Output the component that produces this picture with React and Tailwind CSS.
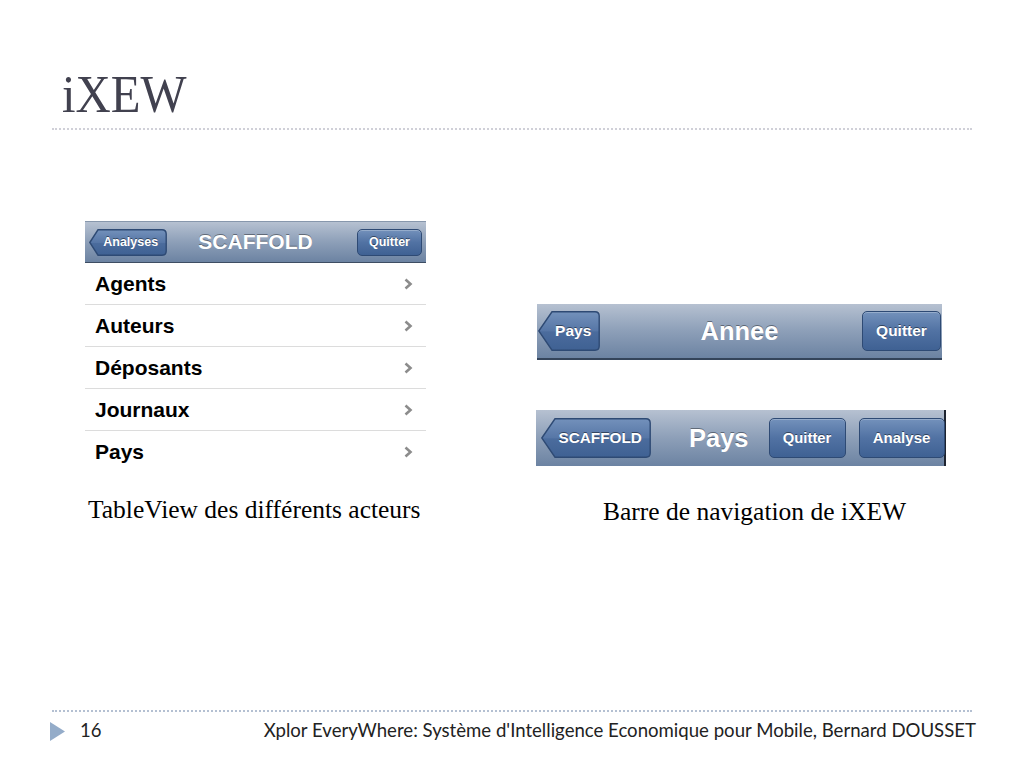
import React from "react";

const SANS = "font-['Liberation_Sans',Arial,sans-serif]";
const SERIF = "font-['Liberation_Serif','Times_New_Roman',serif]";

function BackButton({ id, w, h, label, fs }) {
  const p = Math.round(h * 0.34);
  const r = 5;
  const d = `M0.8 ${h / 2} L${p} 0.8 H${w - r} Q${w - 0.8} 0.8 ${w - 0.8} ${r} V${h - r} Q${w - 0.8} ${h - 0.8} ${w - r} ${h - 0.8} H${p} Z`;
  return (
    <div className="relative shrink-0" style={{ width: w, height: h }}>
      <svg width={w} height={h} className="absolute inset-0">
        <defs>
          <linearGradient id={id} x1="0" y1="0" x2="0" y2="1">
            <stop offset="0" stopColor="#7391bb" />
            <stop offset="0.5" stopColor="#5676a6" />
            <stop offset="0.52" stopColor="#4b6c9d" />
            <stop offset="1" stopColor="#3f6193" />
          </linearGradient>
        </defs>
        <path d={d} fill={`url(#${id})`} stroke="#2e4a74" strokeWidth="1.4" />
      </svg>
      <div
        className={`absolute inset-0 flex items-center justify-center font-bold text-white ${SANS} [text-shadow:0_-1px_0_rgba(0,0,0,0.45)]`}
        style={{ fontSize: fs, paddingLeft: p * 0.6 }}
      >
        {label}
      </div>
    </div>
  );
}

function NavButton({ w, h, label, fs }) {
  return (
    <div
      className={`shrink-0 flex items-center justify-center rounded-[5px] border border-[#2e4a74] bg-gradient-to-b from-[#7391bb] via-[#5172a3] to-[#3f6193] font-bold text-white ${SANS} shadow-[inset_0_1px_0_rgba(255,255,255,0.25)] [text-shadow:0_-1px_0_rgba(0,0,0,0.45)]`}
      style={{ width: w, height: h, fontSize: fs }}
    >
      {label}
    </div>
  );
}

const NAVBG = "bg-gradient-to-b from-[#b6c1d1] via-[#8d9fb8] to-[#6c83a2]";
const NAVTITLE = `text-white font-bold ${SANS} [text-shadow:0_-1px_0_rgba(0,0,0,0.4)]`;

function Chevron() {
  return (
    <svg width="10" height="12" viewBox="0 0 10 12" className="shrink-0">
      <path d="M2.5 1.5 L7.5 6 L2.5 10.5" fill="none" stroke="#8c8c8c" strokeWidth="2.6" />
    </svg>
  );
}

function Row({ label, last }) {
  return (
    <div className={`h-[42px] flex items-center justify-between pl-[10px] pr-[13px] ${last ? "" : "border-b border-[#dcdcdc]"}`}>
      <span className={`text-[21px] font-bold text-black ${SANS}`}>{label}</span>
      <Chevron />
    </div>
  );
}

export default function App() {
  return (
    <div className="w-[1024px] h-[768px] bg-white flex flex-col overflow-hidden">
      {/* Title */}
      <div className="pl-[62px] pt-[68px] h-[120px]">
        <div className={`${SERIF} text-[53px] leading-[52px] text-[#41414f] origin-left scale-x-[0.92] whitespace-nowrap`}>
          iXEW
        </div>
      </div>
      <div className="mx-[52px] mt-[8px] border-t-2 border-dotted border-[#d0d0d8]" />

      {/* Body */}
      <div className="flex-1 flex">
        {/* Left */}
        <div className="ml-[85px] w-[341px] mt-[91px] flex flex-col">
          <div className={`h-[42px] ${NAVBG} border-t border-[#8797ac] border-b border-b-[#3d4d63] grid grid-cols-[1fr_auto_1fr] items-center px-[4px]`}>
            <BackButton id="bb1" w={78} h={27} label="Analyses" fs={12.5} />
            <div className={`${NAVTITLE} text-[21px]`}>SCAFFOLD</div>
            <div className="justify-self-end">
              <NavButton w={65} h={27} label="Quitter" fs={12.5} />
            </div>
          </div>
          <Row label="Agents" />
          <Row label="Auteurs" />
          <Row label="Déposants" />
          <Row label="Journaux" />
          <Row label="Pays" last />
          <div className={`mt-[23px] pl-[3px] ${SERIF} text-[25.5px] leading-[28px] text-black whitespace-nowrap`}>
            TableView des différents acteurs
          </div>
        </div>

        {/* Right */}
        <div className="ml-[110px] mt-[174px] flex flex-col">
          <div className={`ml-[1px] w-[405px] h-[56px] ${NAVBG} border-b-2 border-[#34445a] grid grid-cols-[1fr_auto_1fr] items-center px-[1px]`}>
            <BackButton id="bb2" w={62} h={40} label="Pays" fs={15.5} />
            <div className={`${NAVTITLE} text-[25.5px]`}>Annee</div>
            <div className="justify-self-end">
              <NavButton w={79} h={40} label="Quitter" fs={15.5} />
            </div>
          </div>
          <div className={`mt-[50px] w-[410px] h-[56px] ${NAVBG} border-r-2 border-[#1e2430] flex items-center pl-[5px]`}>
            <BackButton id="bb3" w={110} h={40} label="SCAFFOLD" fs={15.3} />
            <div className={`ml-[38px] ${NAVTITLE} text-[25.5px]`}>Pays</div>
            <div className="ml-[20px]">
              <NavButton w={77} h={40} label="Quitter" fs={14.8} />
            </div>
            <div className="ml-[13px]">
              <NavButton w={86} h={40} label="Analyse" fs={15} />
            </div>
          </div>
          <div className={`mt-[32px] ml-[67px] ${SERIF} text-[25.5px] leading-[28px] text-black whitespace-nowrap`}>
            Barre de navigation de iXEW
          </div>
        </div>
      </div>

      {/* Footer */}
      <div className="h-[58px]">
        <div className="mx-[52px] border-t-2 border-dotted border-[#b4c0d2]" />
        <div className="flex items-center h-[38px] pl-[50px] pr-[48px]">
          <svg width="15" height="19" viewBox="0 0 15 19" className="shrink-0">
            <polygon points="0,0 15,9.5 0,19" fill="#94acc9" />
          </svg>
          <div className="ml-[15px] font-['Lato',sans-serif] text-[18.5px] text-[#222]">16</div>
          <div className="flex-1 text-right font-['Lato',sans-serif] text-[18.6px] text-[#222] whitespace-nowrap">
            Xplor EveryWhere: Système d'Intelligence Economique pour Mobile, Bernard DOUSSET
          </div>
        </div>
      </div>
    </div>
  );
}
